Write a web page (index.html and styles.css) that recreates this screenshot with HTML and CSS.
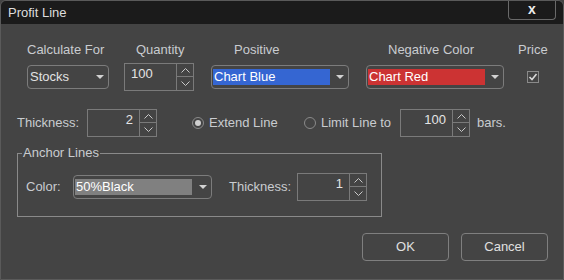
FILE: index.html
```html
<!DOCTYPE html>
<html>
<head>
<meta charset="utf-8">
<link rel="stylesheet" href="styles.css">
</head>
<body>
<div class="win">
  <div class="titlebar">
    <span class="title">Profit Line</span>
    <div class="close">x</div>
  </div>
  <div class="content">
    <div class="row1">
      <div class="col c1">
        <div class="lbl">Calculate For</div>
        <div class="ctl">
          <div class="combo w82"><span class="ctext">Stocks</span><svg class="arrow" width="8" height="4" viewBox="0 0 8 4"><path d="M0 0H8L4 4Z" fill="#d2d2d2"/></svg></div>
        </div>
      </div>
      <div class="col c2">
        <div class="lbl">Quantity</div>
        <div class="ctl">
          <div class="spin"><div class="spin-val">100</div><div class="spin-btns"><div class="sb"><svg width="9" height="5" viewBox="0 0 9 5"><path d="M0.5 4.5L4.5 0.5L8.5 4.5" stroke="#c8c8c8" fill="none"/></svg></div><div class="sb"><svg width="9" height="5" viewBox="0 0 9 5"><path d="M0.5 0.5L4.5 4.5L8.5 0.5" stroke="#c8c8c8" fill="none"/></svg></div></div></div>
        </div>
      </div>
      <div class="col c3">
        <div class="lbl">Positive</div>
        <div class="ctl">
          <div class="combo w138"><span class="fill blue">Chart Blue</span><svg class="arrow" width="8" height="4" viewBox="0 0 8 4"><path d="M0 0H8L4 4Z" fill="#d2d2d2"/></svg></div>
        </div>
      </div>
      <div class="col c4">
        <div class="lbl">Negative Color</div>
        <div class="ctl">
          <div class="combo w138"><span class="fill red">Chart Red</span><svg class="arrow" width="8" height="4" viewBox="0 0 8 4"><path d="M0 0H8L4 4Z" fill="#d2d2d2"/></svg></div>
        </div>
      </div>
      <div class="col c5">
        <div class="lbl">Price</div>
        <div class="ctl">
          <div class="check"><svg width="10" height="10" viewBox="0 0 10 10"><path d="M1.5 5L4 7.5L8.5 2" stroke="#d8d8d8" stroke-width="1.6" fill="none"/></svg></div>
        </div>
      </div>
    </div>

    <div class="row2">
      <span class="l-thick">Thickness:</span>
      <div class="spin"><div class="spin-val r">2</div><div class="spin-btns"><div class="sb"><svg width="9" height="5" viewBox="0 0 9 5"><path d="M0.5 4.5L4.5 0.5L8.5 4.5" stroke="#c8c8c8" fill="none"/></svg></div><div class="sb"><svg width="9" height="5" viewBox="0 0 9 5"><path d="M0.5 0.5L4.5 4.5L8.5 0.5" stroke="#c8c8c8" fill="none"/></svg></div></div></div>
      <div class="radio-item extend"><span class="radio on"><span class="dot"></span></span><span class="rtext">Extend Line</span></div>
      <div class="radio-item limit"><span class="radio"></span><span class="rtext">Limit Line to</span></div>
      <div class="spin"><div class="spin-val r">100</div><div class="spin-btns"><div class="sb"><svg width="9" height="5" viewBox="0 0 9 5"><path d="M0.5 4.5L4.5 0.5L8.5 4.5" stroke="#c8c8c8" fill="none"/></svg></div><div class="sb"><svg width="9" height="5" viewBox="0 0 9 5"><path d="M0.5 0.5L4.5 4.5L8.5 0.5" stroke="#c8c8c8" fill="none"/></svg></div></div></div>
      <span class="bars">bars.</span>
    </div>

    <fieldset class="group">
      <legend>Anchor Lines</legend>
      <div class="grow">
        <span class="l-color">Color:</span>
        <div class="combo w139"><span class="fill gray">50%Black</span><svg class="arrow" width="8" height="4" viewBox="0 0 8 4"><path d="M0 0H8L4 4Z" fill="#d2d2d2"/></svg></div>
        <span class="l-gthick">Thickness:</span>
        <div class="spin"><div class="spin-val r">1</div><div class="spin-btns"><div class="sb"><svg width="9" height="5" viewBox="0 0 9 5"><path d="M0.5 4.5L4.5 0.5L8.5 4.5" stroke="#c8c8c8" fill="none"/></svg></div><div class="sb"><svg width="9" height="5" viewBox="0 0 9 5"><path d="M0.5 0.5L4.5 4.5L8.5 0.5" stroke="#c8c8c8" fill="none"/></svg></div></div></div>
      </div>
    </fieldset>

    <div class="buttons">
      <div class="btn">OK</div>
      <div class="btn">Cancel</div>
    </div>
  </div>
</div>
</body>
</html>
```

FILE: styles.css
```css
html, body {
  margin: 0;
  padding: 0;
  background: #444444;
}
body {
  font-family: "Liberation Sans", Arial, sans-serif;
  font-size: 13px;
  line-height: 16px;
  color: #c9ccd0;
}
.win {
  width: 564px;
  height: 280px;
  box-sizing: border-box;
  border: 1px solid #5a5a5a;
  border-radius: 6px 6px 0 0;
  background: #444444;
  overflow: hidden;
}
.titlebar {
  height: 23px;
  background: #1b1b1b;
  display: flex;
  align-items: flex-start;
}
.title {
  padding: 4px 0 0 7px;
  color: #dedede;
}
.close {
  margin-left: auto;
  margin-right: 7px;
  width: 48px;
  height: 19px;
  box-sizing: border-box;
  border: 1px solid #6a6a6a;
  border-top: none;
  border-radius: 0 0 4px 4px;
  display: flex;
  justify-content: center;
  align-items: center;
  font-weight: bold;
  font-size: 14px;
  color: #eeeeee;
  padding-bottom: 3px;
}
.content {
  padding: 18px 0 0 16px;
}
.row1 {
  display: flex;
  margin-left: 10px;
}
.col {
  display: flex;
  flex-direction: column;
}
.lbl {
  height: 16px;
  margin-bottom: 5px;
  white-space: nowrap;
}
.ctl {
  height: 28px;
  display: flex;
  align-items: center;
}
.c1 { width: 82px; }
.c2 { width: 70px; margin-left: 15px; }
.c2 .lbl { margin-left: 12px; }
.c3 { width: 138px; margin-left: 17px; }
.c3 .lbl { margin-left: 23px; }
.c4 { width: 138px; margin-left: 17px; }
.c4 .lbl { margin-left: 22px; }
.c5 { margin-left: 14px; align-items: center; }

.combo {
  height: 24px;
  box-sizing: border-box;
  border: 1px solid #7c7c7c;
  border-radius: 4px;
  display: flex;
  align-items: center;
  padding: 0 4px 0 1px;
  color: #e2e2e2;
}
.w82 { width: 82px; }
.w138 { width: 138px; }
.w139 { width: 139px; }
.ctext { padding-left: 1px; }
.fill {
  width: 117px;
  height: 16px;
  line-height: 16px;
  padding-left: 1px;
  box-sizing: border-box;
  color: #ffffff;
  white-space: nowrap;
}
.blue { background: #3566d2; }
.red { background: #cc3333; }
.gray { background: #808080; }
.arrow { margin-left: auto; display: block; }

.spin {
  display: flex;
  height: 28px;
}
.spin-val {
  width: 53px;
  box-sizing: border-box;
  border: 1px solid #7a7a7a;
  padding: 2px 6px 0;
  color: #e4e4e4;
}
.spin-val.r { text-align: right; }
.spin-btns {
  display: flex;
  flex-direction: column;
  width: 17px;
}
.sb {
  height: 14px;
  box-sizing: border-box;
  border: 1px solid #7a7a7a;
  border-left: none;
  display: flex;
  align-items: center;
  justify-content: center;
}
.sb + .sb { border-top: none; }
.sb svg { display: block; }

.check {
  width: 12px;
  height: 12px;
  box-sizing: border-box;
  border: 1px solid #8a8a8a;
  display: flex;
  align-items: center;
  justify-content: center;
}
.check svg { display: block; }

.row2 {
  display: flex;
  align-items: center;
  height: 28px;
  margin-top: 18px;
}
.l-thick { width: 70px; }
.radio-item {
  display: flex;
  align-items: center;
}
.extend { margin-left: 35px; width: 112px; }
.limit { width: 96px; }
.radio {
  width: 12px;
  height: 12px;
  box-sizing: border-box;
  border: 1px solid #8a8a8a;
  border-radius: 50%;
  display: flex;
  align-items: center;
  justify-content: center;
}
.dot {
  width: 6px;
  height: 6px;
  border-radius: 50%;
  background: #cfcfcf;
}
.rtext { margin-left: 5px; white-space: nowrap; }
.bars { margin-left: 7px; }

.group {
  margin: 8px 0 0 0;
  padding: 0;
  width: 365px;
  min-width: 0;
  box-sizing: border-box;
  border: 1px solid #8a8a8a;
}
.group legend {
  margin-left: 4px;
  padding: 0 1px;
  line-height: 16px;
}
.grow {
  display: flex;
  align-items: center;
  height: 28px;
  margin: 12px 0 15px 8px;
}
.l-color { width: 47px; }
.l-gthick { margin-left: 17px; width: 68px; }

.buttons {
  display: flex;
  justify-content: flex-end;
  gap: 12px;
  margin-top: 16px;
  padding-right: 15px;
}
.btn {
  width: 87px;
  height: 28px;
  box-sizing: border-box;
  border: 1px solid #7f7f7f;
  border-radius: 4px;
  display: flex;
  align-items: center;
  justify-content: center;
  color: #e0e0e0;
}
```
